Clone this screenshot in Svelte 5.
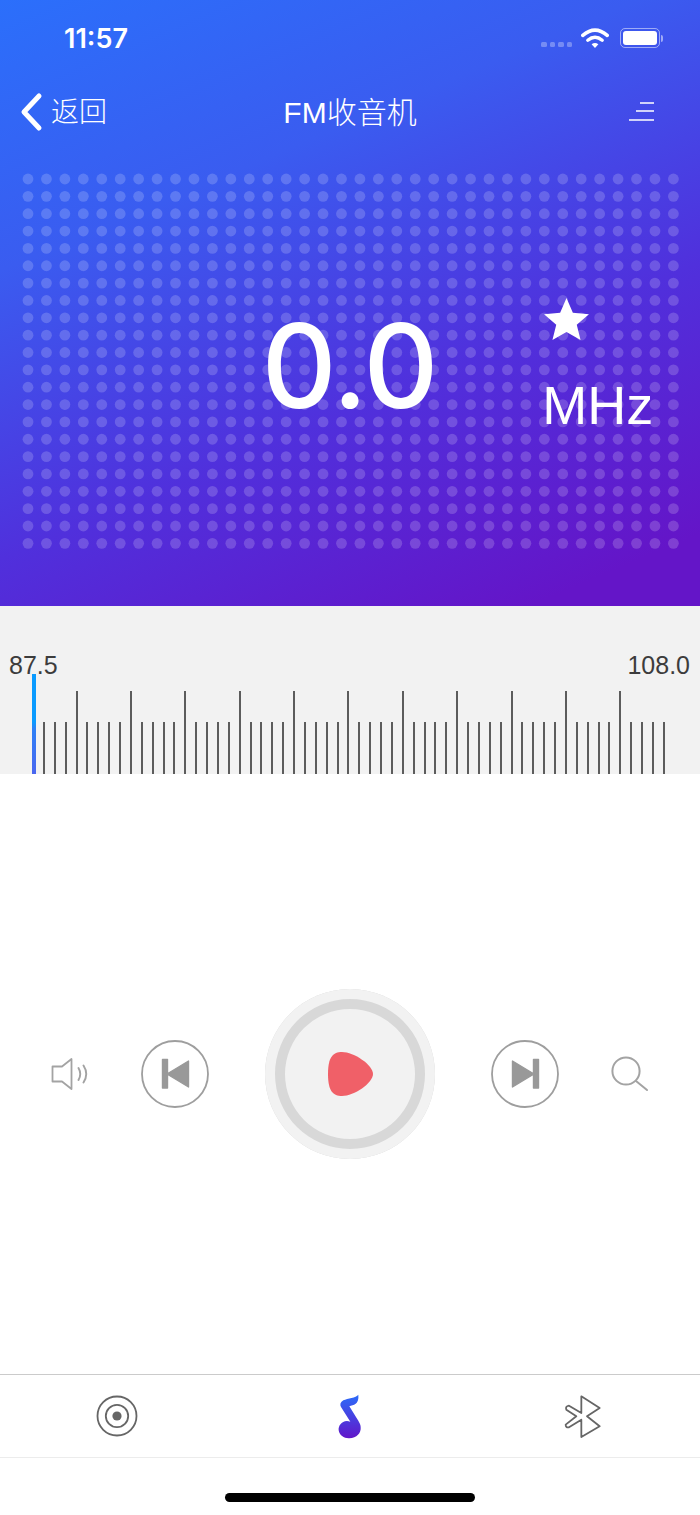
<script>
	const dotCols = Array.from({ length: 36 }, (_, i) => 28 + i * 18.44);
	const dotRows = Array.from({ length: 22 }, (_, i) => 179 - 172 + i * 17.35);
	const ticks = Array.from({ length: 59 }, (_, i) => i);

	function tickClass(i) {
		if (i === 0) return 'tick marker';
		return i % 5 === 4 ? 'tick tall' : 'tick';
	}
</script>

<div class="page">
	<header class="hero">
		<div class="status">
			<span class="time">11:57</span>
			<div class="status-icons">
				<div class="signal"><i></i><i></i><i></i><i></i></div>
				<svg class="wifi" viewBox="0 0 28 20" width="28" height="20">
					<path d="M1.8 7.4Q14-3 26.2 7.4" fill="none" stroke="#fff" stroke-width="3.6" stroke-linecap="round" />
					<path d="M6.8 12.2Q14 6.2 21.2 12.2" fill="none" stroke="#fff" stroke-width="3.4" stroke-linecap="round" />
					<path d="M10.6 16.2Q14 13.6 17.4 16.2L14 20Z" fill="#fff" />
				</svg>
				<div class="battery"><span class="battery-fill"></span></div>
				<span class="battery-cap"></span>
			</div>
		</div>

		<nav class="nav">
			<div class="back">
				<svg viewBox="0 0 24 40" width="24" height="40">
					<path d="M19 4L4 20L19 36" fill="none" stroke="#fff" stroke-width="5" stroke-linecap="round" stroke-linejoin="round" />
				</svg>
				<span class="back-label">返回</span>
			</div>
			<h1 class="title">FM收音机</h1>
			<svg class="menu" viewBox="0 0 26 20" width="26" height="20">
				<path d="M11 1H25M7 9H25M0 18H25" fill="none" stroke="#fff" stroke-width="1.6" />
			</svg>
		</nav>

		<section class="display">
			<svg class="dots" viewBox="0 0 700 378" width="700" height="378" aria-hidden="true">
				{#each dotRows as y}
					{#each dotCols as x}
						<circle cx={x} cy={y} r="5.4" fill="#fff" fill-opacity="0.18" />
					{/each}
				{/each}
			</svg>
			<div class="freq">0.0</div>
			<div class="freq-side">
				<svg viewBox="0 0 46 43" width="45" height="42">
					<path d="M23 0L29.5 15L46 16.6L33.5 27.4L37.4 43L23 34.8L8.6 43L12.5 27.4L0 16.6L16.5 15Z" fill="#fff" />
				</svg>
				<span class="unit">MHz</span>
			</div>
		</section>
	</header>

	<section class="ruler">
		<div class="labels">
			<span>87.5</span>
			<span>108.0</span>
		</div>
		<div class="ticks">
			{#each ticks as i}
				<span class={tickClass(i)}></span>
			{/each}
		</div>
	</section>

	<main class="player">
		<div class="side">
			<button class="icon-btn" aria-label="音量">
				<svg viewBox="0 0 38 34" width="38" height="34">
					<path d="M1.5 9.5H11L20.5 2V32L11 24.5H1.5Z" fill="none" stroke="#a3a3a3" stroke-width="1.8" stroke-linejoin="round" />
					<path d="M27.5 11Q31 17 27.5 23M32.5 8.5Q38 17 32.5 25.5" fill="none" stroke="#a3a3a3" stroke-width="1.9" stroke-linecap="round" />
				</svg>
			</button>
			<button class="round-btn" aria-label="上一台">
				<svg viewBox="0 0 68 68" width="68" height="68">
					<circle cx="34" cy="34" r="33" fill="none" stroke="#9e9e9e" stroke-width="1.8" />
					<path d="M21.5 19.5H26.5V48H21.5ZM26 34L47.5 21V47Z" fill="#999" stroke="#999" stroke-width="1.4" stroke-linejoin="round" />
				</svg>
			</button>
		</div>

		<button class="play" aria-label="播放">
			<svg viewBox="0 0 46 46" width="46" height="46">
				<path d="M1 23C1 6 6 1 15 1C27 1 46 14 46 23C46 32 27 45 15 45C6 45 1 40 1 23Z" fill="#f06068" />
			</svg>
		</button>

		<div class="side">
			<button class="round-btn" aria-label="下一台">
				<svg viewBox="0 0 68 68" width="68" height="68">
					<circle cx="34" cy="34" r="33" fill="none" stroke="#9e9e9e" stroke-width="1.8" />
					<path d="M47.5 19.5H42.5V48H47.5ZM43 34L21.5 21V47Z" fill="#999" stroke="#999" stroke-width="1.4" stroke-linejoin="round" />
				</svg>
			</button>
			<button class="icon-btn" aria-label="搜索">
				<svg viewBox="0 0 40 38" width="40" height="38">
					<circle cx="16" cy="16" r="13.6" fill="none" stroke="#a3a3a3" stroke-width="2" />
					<path d="M26 26L37 35" fill="none" stroke="#a3a3a3" stroke-width="2" stroke-linecap="round" />
				</svg>
			</button>
		</div>
	</main>

	<div class="tabs">
		<button class="tab" aria-label="电台">
			<svg viewBox="0 0 42 42" width="42" height="42">
				<circle cx="21" cy="21" r="19.5" fill="none" stroke="#666" stroke-width="1.8" />
				<circle cx="21" cy="21" r="11.2" fill="none" stroke="#666" stroke-width="1.8" />
				<circle cx="21" cy="21" r="4.6" fill="#666" />
			</svg>
		</button>
		<button class="tab" aria-label="音乐">
			<svg viewBox="800 70 84 140" width="28" height="46.67">
				<defs>
					<linearGradient id="note" x1="0" y1="0" x2="0" y2="1">
						<stop offset="0" stop-color="#2c6cf9" />
						<stop offset="1" stop-color="#6216c9" />
					</linearGradient>
				</defs>
				<path d="M867 75C860 85 835 85 822 92C813 97 811 105 815 112L843 156C820 148 806 168 808 182C810 197 825 207 840 206C862 205 876 190 874 172C874 165 871 160 867 153L840 110C852 105 870 105 867 75Z" fill="url(#note)" />
			</svg>
		</button>
		<button class="tab" aria-label="蓝牙">
			<svg viewBox="100 40 120 140" width="40" height="46.67">
				<path d="M155 100V50L210 85L172 110L210 140L155 172V120L118 143Q108 145 108 135L140 110L110 90Q106 80 118 78Z" fill="none" stroke="#666" stroke-width="5.4" stroke-linejoin="round" />
			</svg>
		</button>
	</div>

	<div class="home-area"><span class="home-bar"></span></div>
</div>

<style>
	:global(body) {
		margin: 0;
		background: #fff;
	}

	.page {
		width: 700px;
		height: 1515px;
		display: flex;
		flex-direction: column;
		overflow: hidden;
		font-family: "Liberation Sans", "Noto Sans CJK SC", sans-serif;
		color: #fff;
	}

	button {
		padding: 0;
		border: none;
		background: none;
		display: flex;
		align-items: center;
		justify-content: center;
	}

	svg {
		display: block;
	}

	.hero {
		height: 606px;
		flex: none;
		background: linear-gradient(157deg, #2b6ffb 0%, #3a5cf0 30%, #5030dc 62%, #6415c8 92%);
	}

	.status {
		height: 76px;
		padding: 0 37px 0 64px;
		display: flex;
		align-items: center;
		justify-content: space-between;
	}

	.time {
		font-family: Inter, sans-serif;
		font-size: 27px;
		font-weight: 600;
	}

	.status-icons {
		display: flex;
		align-items: center;
	}

	.signal {
		display: flex;
		gap: 3px;
		margin: 13px 9px 0 0;
	}

	.signal i {
		width: 5.5px;
		height: 5px;
		border-radius: 1.5px;
		background: rgba(255, 255, 255, 0.3);
	}

	.wifi {
		margin-right: 11px;
	}

	.battery {
		width: 40px;
		height: 20px;
		box-sizing: border-box;
		padding: 2px;
		border: 1.5px solid rgba(255, 255, 255, 0.5);
		border-radius: 5px;
	}

	.battery-fill {
		display: block;
		height: 100%;
		border-radius: 3px;
		background: #fff;
	}

	.battery-cap {
		width: 2px;
		height: 7px;
		margin-left: 1px;
		border-radius: 0 2px 2px 0;
		background: rgba(255, 255, 255, 0.5);
	}

	.nav {
		height: 72px;
		padding: 0 45px 0 20px;
		display: flex;
		align-items: center;
		justify-content: space-between;
		position: relative;
	}

	.back {
		display: flex;
		align-items: center;
		gap: 7px;
		font-size: 28px;
		font-weight: 300;
	}

	.back-label {
		padding-bottom: 4px;
	}

	.title {
		position: absolute;
		left: 0;
		right: 0;
		margin: 0;
		padding-bottom: 4px;
		text-align: center;
		font-size: 30px;
		font-weight: 300;
	}

	.display {
		position: relative;
		margin-top: 24px;
		height: 378px;
		display: grid;
		grid-template-columns: 1fr auto 1fr;
		align-items: center;
	}

	.dots {
		position: absolute;
		inset: 0;
	}

	.freq {
		position: relative;
		grid-column: 2;
		font-family: Inter, sans-serif;
		font-size: 116px;
		font-weight: 500;
		letter-spacing: -1px;
		padding-right: 1px;
		line-height: 1;
		margin-top: 10px;
	}

	.freq-side {
		position: relative;
		grid-column: 3;
		display: flex;
		flex-direction: column;
		align-items: flex-start;
		padding-left: 104px;
		margin-top: 7px;
	}

	.freq-side svg {
		margin-left: 2px;
	}

	.unit {
		font-size: 54px;
		line-height: 1;
		margin-top: 38px;
	}

	.ruler {
		height: 168px;
		flex: none;
		background: #f2f2f2;
		color: #3c3c3c;
		display: flex;
		flex-direction: column;
		justify-content: flex-end;
	}

	.labels {
		display: flex;
		justify-content: space-between;
		padding: 0 10px 0 9px;
		font-size: 25px;
		line-height: 28px;
		margin-bottom: -5px;
	}

	.ticks {
		height: 100px;
		margin: 0 35px 0 32px;
		display: flex;
		align-items: flex-end;
		justify-content: space-between;
	}

	.tick {
		width: 2px;
		height: 52px;
		background: #5c5c5c;
	}

	.tick.tall {
		height: 83px;
	}

	.tick.marker {
		width: 4px;
		height: 100px;
		margin-right: -2px;
		background: linear-gradient(180deg, #0a9bff 48%, #2e80f6 55%, #4a66ef 100%);
	}

	.player {
		flex: 1;
		display: flex;
		align-items: center;
		justify-content: center;
		gap: 55px;
		background: #fff;
	}

	.side {
		display: flex;
		align-items: center;
		gap: 35px;
	}

	.icon-btn,
	.round-btn {
		width: 70px;
		height: 68px;
	}

	.play {
		box-sizing: border-box;
		width: 170px;
		height: 170px;
		border-radius: 50%;
		background: #f2f2f2;
		box-shadow: inset 0 0 0 10px #f2f2f2, inset 0 0 0 20px #d8d8d8;
	}

	.tabs {
		height: 84px;
		flex: none;
		display: flex;
		box-sizing: border-box;
		border-top: 1px solid #cbcbcb;
		border-bottom: 1px solid #ececec;
	}

	.tab {
		flex: 1;
	}

	.home-area {
		height: 57px;
		flex: none;
		display: flex;
		justify-content: center;
		align-items: flex-start;
		padding-top: 35px;
		box-sizing: border-box;
		background: #fff;
	}

	.home-bar {
		width: 250px;
		height: 9px;
		border-radius: 5px;
		background: #000;
	}
</style>
